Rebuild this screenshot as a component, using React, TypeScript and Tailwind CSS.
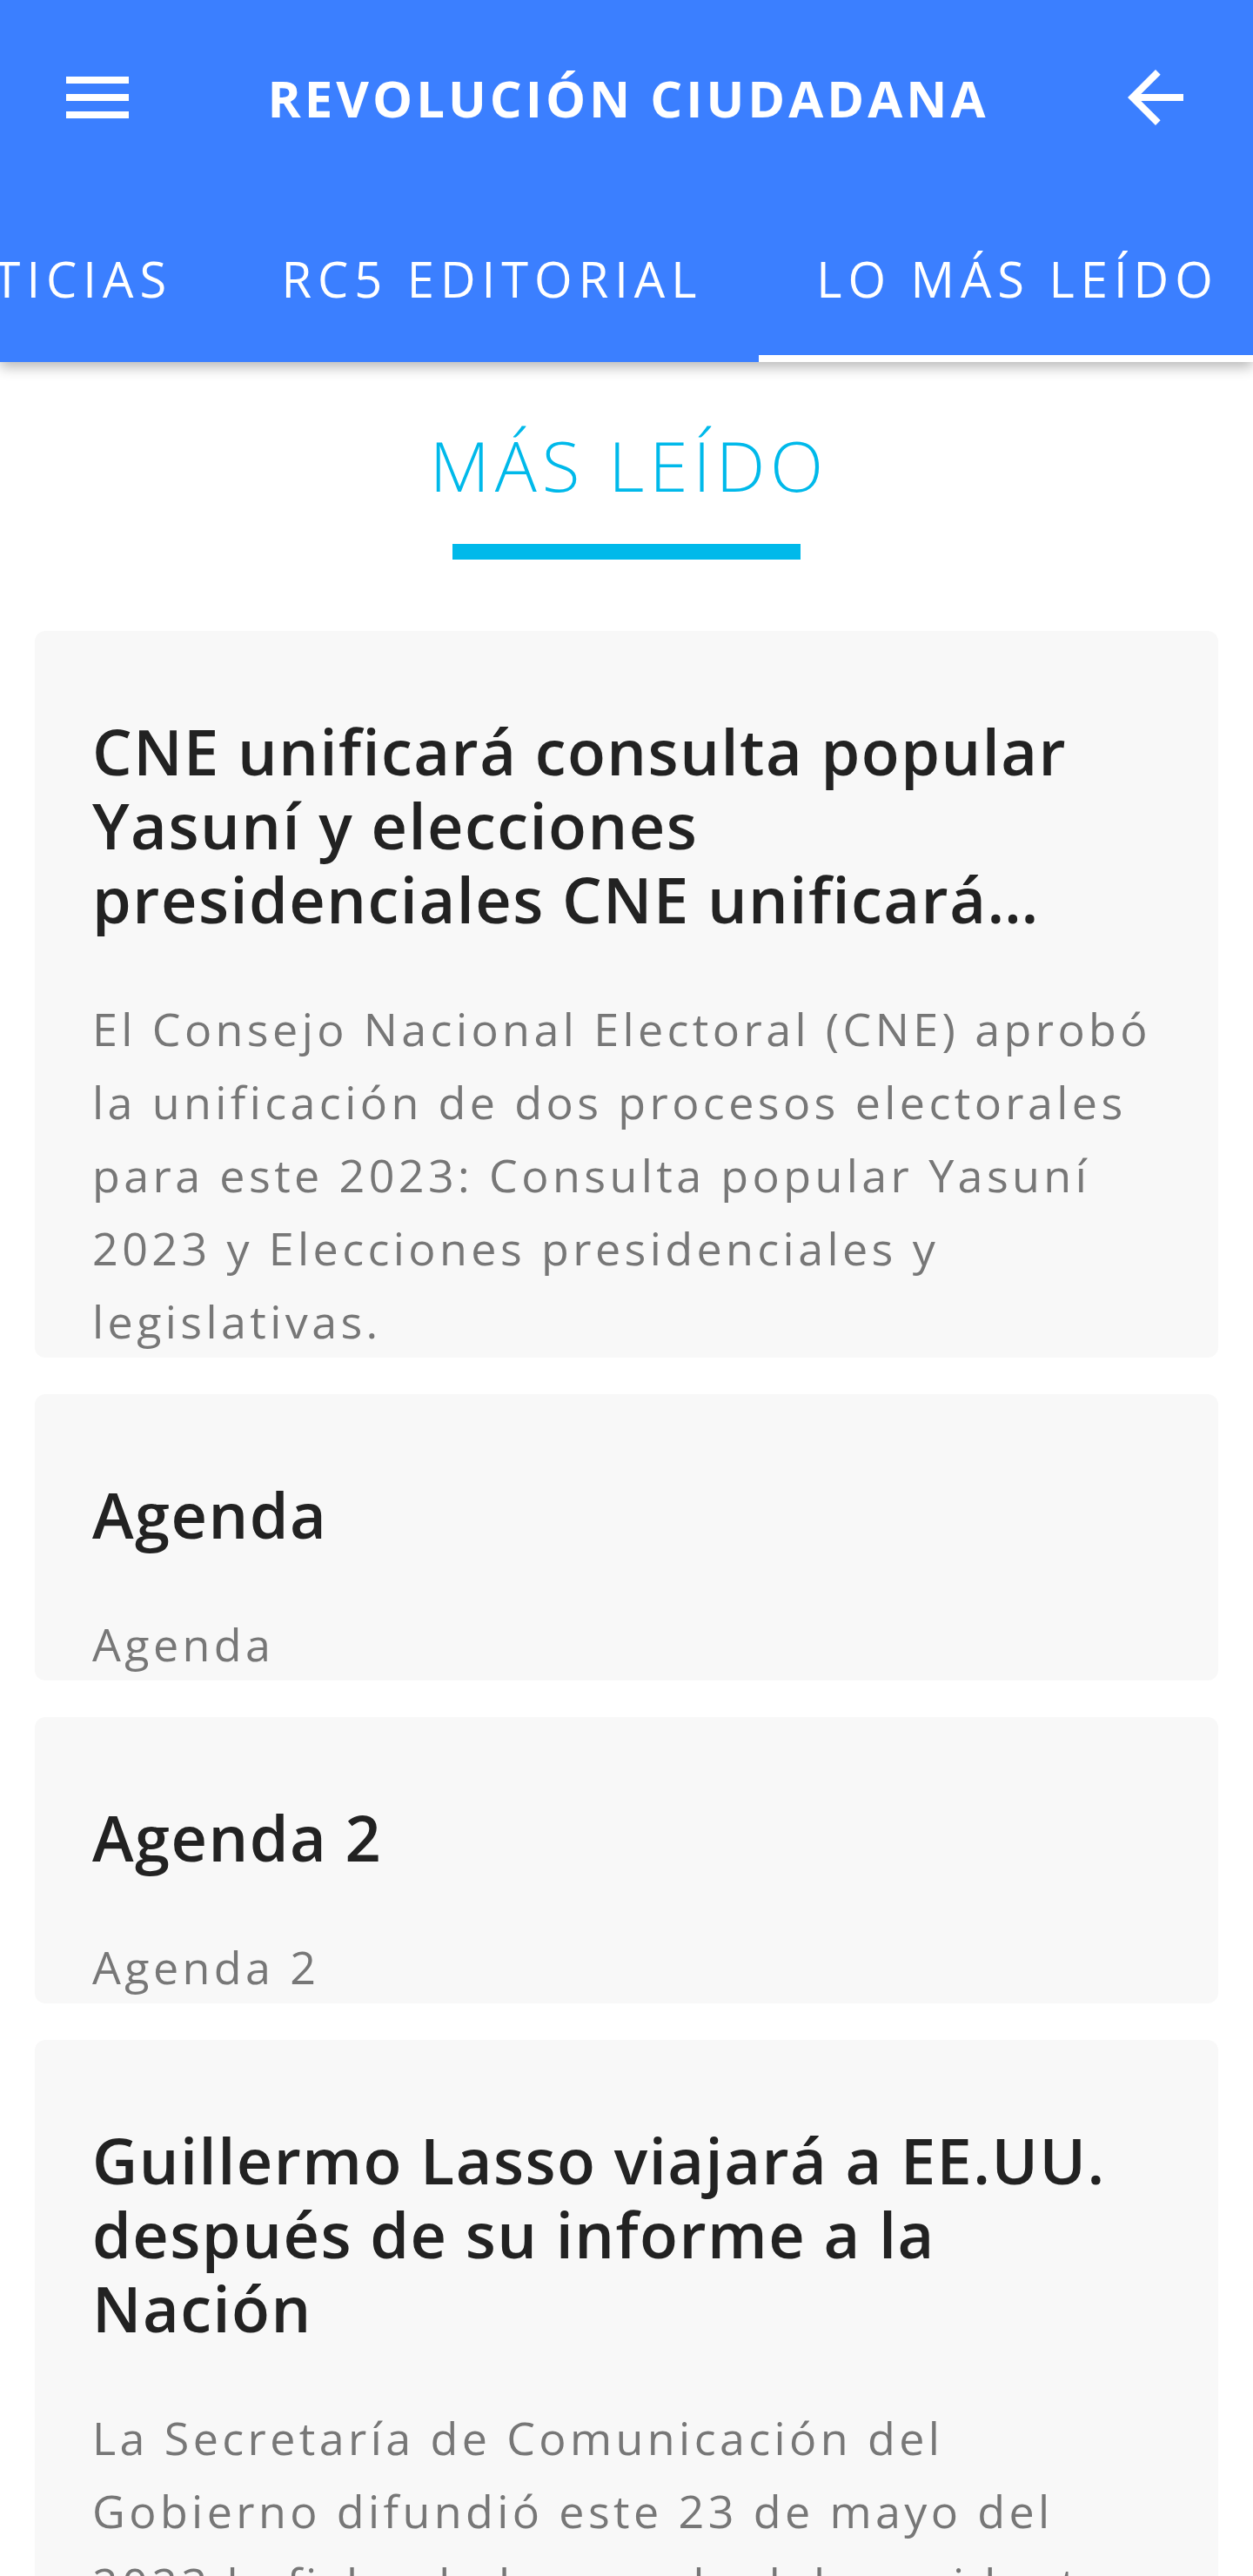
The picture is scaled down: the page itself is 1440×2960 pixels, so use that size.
import React from 'react';

interface Article {
  title: string;
  summary: string;
}

const articles: Article[] = [
  {
    title:
      'CNE unificará consulta popular Yasuní y elecciones presidenciales CNE unificará consulta popular Yasuní y elecciones presidenciales',
    summary:
      'El Consejo Nacional Electoral (CNE) aprobó la unificación de dos procesos electorales para este 2023: Consulta popular Yasuní 2023 y Elecciones presidenciales y legislativas.',
  },
  { title: 'Agenda', summary: 'Agenda' },
  { title: 'Agenda 2', summary: 'Agenda 2' },
  {
    title: 'Guillermo Lasso viajará a EE.UU. después de su informe a la Nación',
    summary:
      'La Secretaría de Comunicación del Gobierno difundió este 23 de mayo del 2023 la ficha de la agenda del presidente Guillermo Lasso en Estados Unidos.',
  },
];

const tabs = [
  { label: 'NOTICIAS', width: 'w-[420px]' },
  { label: 'RC5 EDITORIAL', width: 'w-[620px]' },
  { label: 'LO MÁS LEÍDO', width: 'w-[588px] -mr-[20px]' },
];

const MenuIcon = () => (
  <svg viewBox="0 0 24 24" className="w-[96px] h-[96px] fill-white">
    <path d="M3 18h18v-2H3v2zm0-5h18v-2H3v2zm0-7v2h18V6H3z" />
  </svg>
);

const BackIcon = () => (
  <svg viewBox="0 0 24 24" className="w-[96px] h-[96px] fill-white">
    <path d="M20 11H7.83l5.59-5.59L12 4l-8 8 8 8 1.41-1.41L7.83 13H20v-2z" />
  </svg>
);

const ArticleCard: React.FC<{ article: Article; clamp?: boolean }> = ({ article, clamp }) => (
  <div className="bg-[#f8f8f8] rounded-[12px] px-[66px] pt-[96px] overflow-hidden">
    <h2
      className={`text-[72px] leading-[85px] font-semibold tracking-[1.5px] text-[#222222] ${clamp ? 'line-clamp-3' : ''}`}
    >
      {article.title}
    </h2>
    <p className="mt-[64px] text-[52px] leading-[84px] tracking-[4.4px] text-[#777777]">{article.summary}</p>
  </div>
);

export default function App() {
  return (
    <div className="w-[1440px] min-h-[2960px] bg-white font-['Open_Sans',sans-serif] overflow-hidden">
      <header className="bg-[#3b7fff] shadow-[0_6px_14px_rgba(0,0,0,0.28)] relative z-10">
        <div className="h-[224px] flex items-center justify-between px-[64px]">
          <MenuIcon />
          <h1 className="text-white text-[58px] font-bold tracking-[4px] pl-[4px]">REVOLUCIÓN CIUDADANA</h1>
          <BackIcon />
        </div>
        <div className="h-[192px] flex justify-end overflow-hidden">
          {tabs.map((tab, i) => {
            const active = i === tabs.length - 1;
            return (
              <div
                key={tab.label}
                className={`shrink-0 whitespace-nowrap flex items-center justify-center text-white text-[56px] tracking-[7px] border-b-[8px] ${tab.width} ${
                  active ? 'border-white' : 'border-transparent'
                }`}
              >
                <span className="pt-[8px] pl-[7px]">{tab.label}</span>
              </div>
            );
          })}
        </div>
      </header>

      <main className="flex flex-col items-center pt-[78px]">
        <h3 className="text-[80px] leading-[80px] font-light tracking-[6px] pl-[6px] text-[#00b9ea]">MÁS LEÍDO</h3>
        <div className="mt-[51px] w-[400px] h-[18px] bg-[#00b9ea]" />
        <div className="mt-[82px] w-full px-[40px] flex flex-col gap-[42px]">
          {articles.map((a, i) => (
            <ArticleCard key={i} article={a} clamp={i === 0} />
          ))}
        </div>
      </main>
    </div>
  );
}
